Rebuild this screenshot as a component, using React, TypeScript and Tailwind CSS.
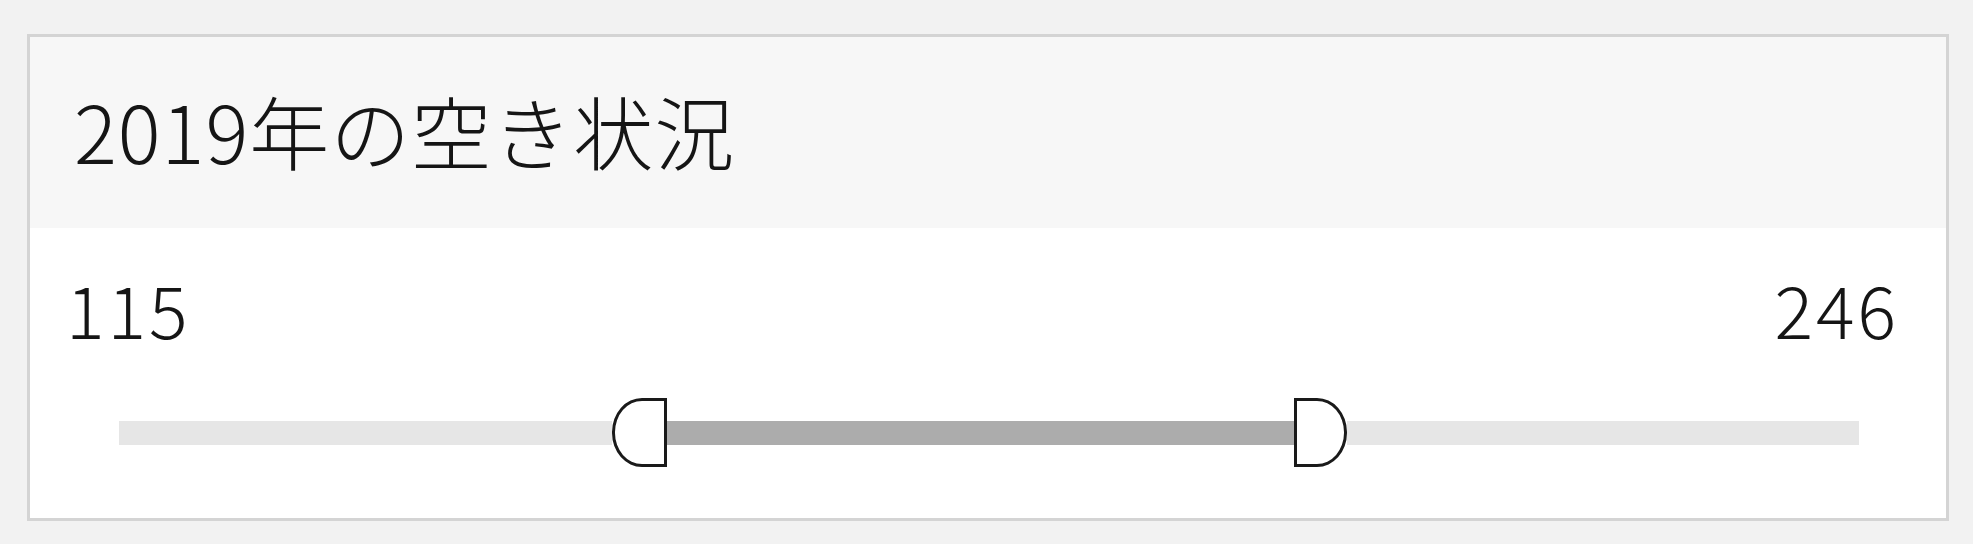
export default function App() {
  return (
    <div
      className="w-[1973px] h-[544px] bg-[#f2f2f2] pt-[34px] pl-[27px] text-[#151515]"
      style={{ fontFamily: '"Noto Sans CJK JP", "Noto Sans", sans-serif' }}
    >
      <div className="w-[1922px] h-[487px] border-[3px] border-[#d4d4d4] bg-white flex flex-col">
        {/* Header */}
        <div className="h-[191px] bg-[#f7f7f7] flex items-center pl-[44px] pb-[8px]">
          <h1 className="text-[80px] leading-none font-light tracking-[1px]">2019年の空き状況</h1>
        </div>

        {/* Range */}
        <div className="flex-1 flex flex-col">
          <div className="flex justify-between pl-[36px] pr-[47px] mt-[44px]">
            <span className="text-[72px] leading-none font-light tracking-[3px]">115</span>
            <span className="text-[72px] leading-none font-light tracking-[3px]">246</span>
          </div>

          <div className="flex items-center h-[69px] mt-[54px] ml-[89px] w-[1740px]">
            <div className="w-[493px] h-[24px] bg-[#e6e6e6]" />
            <div className="w-[55px] h-[69px] shrink-0 bg-white border-[3px] border-[#1a1a1a] rounded-tl-[30px_34px] rounded-bl-[30px_34px]" />
            <div className="w-[627px] h-[24px] bg-[#acacac]" />
            <div className="w-[53px] h-[69px] shrink-0 bg-white border-[3px] border-[#1a1a1a] rounded-tr-[30px_34px] rounded-br-[30px_34px]" />
            <div className="flex-1 h-[24px] bg-[#e6e6e6]" />
          </div>
        </div>
      </div>
    </div>
  );
}
